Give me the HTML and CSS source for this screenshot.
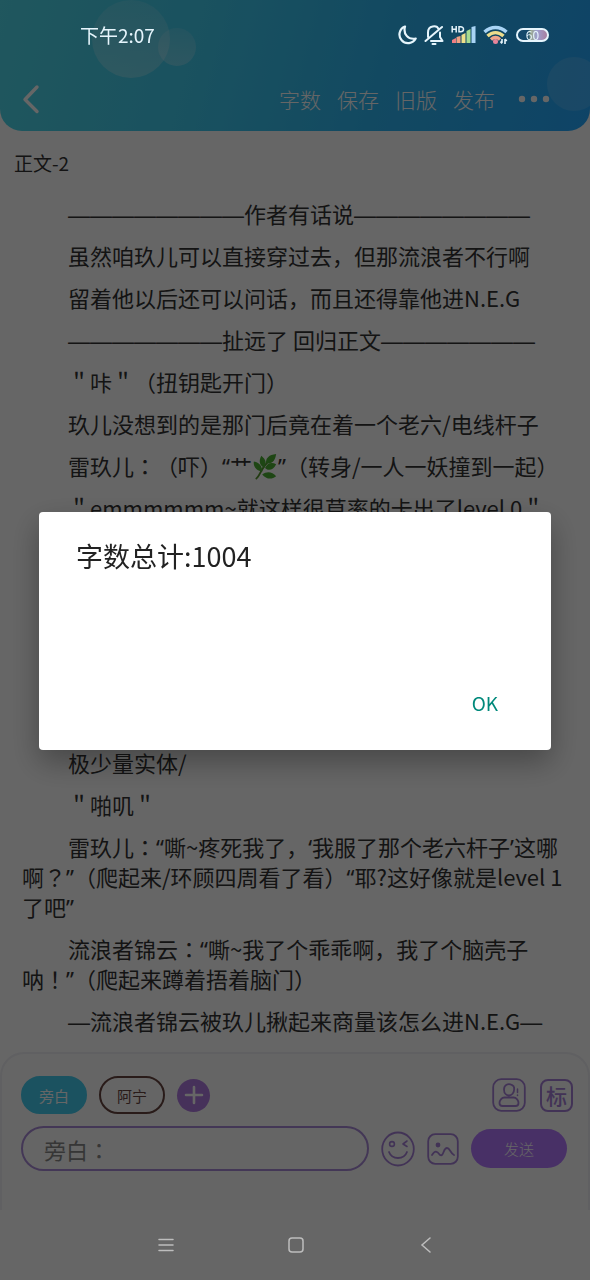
FILE: index.html
```html
<!DOCTYPE html>
<html lang="zh-CN">
<head>
<meta charset="utf-8">
<meta name="viewport" content="width=device-width, initial-scale=1">
<title>正文-2</title>
<link rel="stylesheet" href="styles.css">
</head>
<body>
<div class="app">
  <header class="header">
    <span class="bubble bubble-large"></span>
    <span class="bubble bubble-small"></span>
    <span class="bubble bubble-edge"></span>
    <div class="toolbar">
      <button class="icon-button" aria-label="返回">
        <svg width="20" height="30" viewBox="0 0 20 30" fill="none" stroke="#fff" stroke-width="3.400" stroke-linecap="round" stroke-linejoin="round"><path d="M15 3 3 15.500l12 12"/></svg>
      </button>
      <nav class="actions">
        <button class="action">字数</button>
        <button class="action">保存</button>
        <button class="action">旧版</button>
        <button class="action">发布</button>
      </nav>
      <button class="icon-button" aria-label="更多">
        <svg width="32" height="8" viewBox="0 0 32 8" fill="#fff"><circle cx="4" cy="4" r="3.2"/><circle cx="16" cy="4" r="3.2"/><circle cx="28" cy="4" r="3.2"/></svg>
      </button>
    </div>
  </header>

  <main class="content">
    <h1 class="chapter">正文-2</h1>
    <article class="story">
      <p><span class="rule">————————</span>作者有话说<span class="rule">————————</span></p>
      <p>虽然咱玖儿可以直接穿过去，但那流浪者不行啊</p>
      <p>留着他以后还可以问话，而且还得靠他进N.E.G</p>
      <p><span class="rule">———————</span>扯远了 回归正文<span class="rule">———————</span></p>
      <p>＂咔＂（扭钥匙开门）</p>
      <p>玖儿没想到的是那门后竟在着一个老六/电线杆子</p>
      <p>雷玖儿<span class="punct" lang="ja">：</span>（吓）<span class="quote">“</span>艹<svg class="herb" viewBox="0 0 26 28" role="img" aria-label="草"><path d="M3 27C8 24 8 15 19 6" fill="none" stroke="#55952d" stroke-width="2"/><g fill="#4cae32"><path d="M25 0c-8 1-11 4-11 10 7 1 10-3 11-10Z"/><path d="M9 2c5 4 6 8 3 13C7 12 6 8 9 2Z"/><path d="M1 8c6 1 9 5 9 11C4 18 0 14 1 8Z"/><path d="M25 11c-5-3-10-1-12 4 4 4 9 2 12-4Z"/><path d="M25 24c-5 4-11 3-15-2 5-4 11-3 15 2Z"/></g></svg><span class="quote">”</span>（转身/一人一妖撞到一起）</p>
      <p>＂emmmmmm~就这样很草率的卡出了level 0＂</p>
      <p class="scene">极少量实体/</p>
      <p>＂啪叽＂</p>
      <p>雷玖儿<span class="punct" lang="ja">：</span><span class="quote">“</span>嘶~疼死我了，<span class="quote">‘</span>我服了那个老六杆子<span class="quote">’</span>这哪啊<span class="punct" lang="ja">？</span><span class="quote">”</span>（爬起来/环顾四周看了看）<span class="quote">“</span>耶?这好像就是level 1了吧<span class="quote">”</span></p>
      <p>流浪者锦云<span class="punct" lang="ja">：</span><span class="quote">“</span>嘶~我了个乖乖啊，我了个脑壳子呐<span class="punct" lang="ja">！</span><span class="quote">”</span>（爬起来蹲着捂着脑门）</p>
      <p><span class="rule">—</span>流浪者锦云被玖儿揪起来商量该怎么进N.E.G<span class="rule">—</span></p>
    </article>
  </main>

  <form class="composer">
    <div class="roles">
      <button type="button" class="role role-active">旁白</button>
      <button type="button" class="role">阿宁</button>
      <button type="button" class="add" aria-label="添加角色">
        <svg width="20" height="20" viewBox="0 0 20 20" stroke="#fff" stroke-width="2.600" stroke-linecap="round"><path d="M10 2v16M2 10h16"/></svg>
      </button>
      <div class="tools">
        <button type="button" class="icon-button" aria-label="角色">
          <svg width="34" height="34" viewBox="0 0 34 34" fill="none" stroke="#a680d8" stroke-width="1.800" stroke-linecap="round"><rect x="1.2" y="1.2" width="31.6" height="31.6" rx="8"/><path d="M20 7c-4-2-8 0-8 4.500s3 6 5 6 6-2 5-8c0-2-2-2-2-2.500ZM12.500 19.500h9c3 0 5 3 5 5.500 0 2-1 3-3 3h-13c-2 0-3-1-3-3 0-2.500 2-5.500 5-5.500Z"/><path d="M25.500 11v3.500M25.500 17v.5" stroke-width="1.500"/></svg>
        </button>
        <button type="button" class="tag">标</button>
      </div>
    </div>
    <div class="entry">
      <input class="message" type="text" lang="ja" placeholder="旁白：" aria-label="旁白">
      <button type="button" class="icon-button" aria-label="表情">
        <svg width="34" height="36" viewBox="0 0 34 36" fill="none" stroke="#a680d8" stroke-width="1.800" stroke-linecap="round" stroke-linejoin="round"><ellipse cx="17" cy="18" rx="15.800" ry="16.500"/><path d="M8 21c3 8 15 8 18 0"/><circle cx="11" cy="13" r="2.400" stroke-width="1.600"/><path d="m26 10-4 3 4 2.500" stroke-width="1.600"/></svg>
      </button>
      <button type="button" class="icon-button" aria-label="图片">
        <svg width="32" height="32" viewBox="0 0 32 32" fill="none" stroke="#a680d8" stroke-width="1.800" stroke-linecap="round" stroke-linejoin="round"><rect x="1.200" y="1.200" width="29.600" height="29.600" rx="7"/><path d="M5 22c3-5 5-4 8 0 4 2 3-7 7-7 3 0 3 5 7 7"/><circle cx="11" cy="12" r="1.500" fill="#a680d8"/></svg>
      </button>
      <button type="submit" class="send">发送</button>
    </div>
  </form>
  <div class="nav-space"></div>
</div>

<div class="scrim">
  <section class="dialog" role="dialog" aria-modal="true" aria-labelledby="dialog-title">
    <h2 class="dialog-title" id="dialog-title">字数总计:1004</h2>
    <button class="dialog-ok">OK</button>
  </section>
</div>

<div class="status-bar">
  <time>下午2:07</time>
  <div class="status-icons">
    <svg width="20" height="20" viewBox="0 0 20 20" fill="none" stroke="#e6f5fc" stroke-width="2.200" stroke-linejoin="round"><path d="M8 1.500A8.600 8.600 0 1 0 18.700 13.500C11 15 6 9 8 1.500Z"/></svg>
    <svg width="20" height="20" viewBox="0 0 20 20" fill="none" stroke="#e6f5fc" stroke-width="2" stroke-linecap="round" stroke-linejoin="round"><path d="M4 12V7.500C4 0 13 0 14.500 4M16 7.500V12l2.500 4H7M1.500 16 18 2M8.500 19h3"/></svg>
    <svg width="25" height="19" viewBox="0 0 25 19"><g fill="none" stroke="#e6f5fc" stroke-width="1.500"><path d="M1.200 1v6.500M5.200 1v6.500M1.200 4.200h4M8 1.700v5.100h1.500c4 0 4-5.100 0-5.100Z"/></g><path fill="#ef7f83" d="M1 15l4-2v5H1z"/><path fill="#f1a083" d="M5.500 12l4-1v7h-4z"/><path fill="#eee08a" d="M10.500 10l4-2v10h-4z"/><path fill="#a6dc91" d="M15.500 6l4-2v14h-4z"/><path fill="#a9d4f5" d="M20.500 2l4-1v17h-4z"/></svg>
    <svg class="wifi" width="26" height="20" viewBox="0 0 26 20" fill="none" stroke-width="3.400"><path stroke="#a9d4f5" d="M1.500 7C8 1 17 1 23.500 7"/><path stroke="#ecdc8c" d="M4.500 11c5-4.500 11-4.500 16 0"/><path stroke="#f0a58a" d="M8 14.500c3-2.600 6-2.600 9 0"/><circle cx="12.500" cy="16.500" r="2.500" fill="#e8849a"/><path stroke="#e6f5fc" stroke-width="1.600" d="M19 14v4M22 14v5M17.500 16.500l1.500 2M22 14l1.800 2"/></svg>
    <span class="battery">60</span>
  </div>
</div>

<nav class="system-nav">
  <button class="icon-button" aria-label="最近任务"><svg width="16" height="16" viewBox="0 0 16 16" stroke="#bdbdbd" stroke-width="1.500" stroke-linecap="round"><path d="M1 2.500h14M1 8h14M1 13.500h14"/></svg></button>
  <button class="icon-button" aria-label="主屏幕"><svg width="16" height="16" viewBox="0 0 16 16" fill="none" stroke="#bdbdbd" stroke-width="1.500"><rect x="1" y="1" width="14" height="14" rx="3"/></svg></button>
  <button class="icon-button" aria-label="后退"><svg width="16" height="16" viewBox="0 0 16 16" fill="none" stroke="#bdbdbd" stroke-width="1.500" stroke-linecap="round"><path d="M12 1 4 8l8 7"/></svg></button>
</nav>
</body>
</html>
```
FILE: styles.css
```css
* {
  box-sizing: border-box;
}

body {
  margin: 0;
  background: #fff;
  color: #333;
  font-family: "Noto Sans CJK SC", "Noto Sans", sans-serif;
  text-spacing-trim: space-all;
}

button,
input {
  margin: 0;
  padding: 0;
  border: 0;
  background: none;
  color: inherit;
  font: inherit;
}

svg {
  display: block;
}

.app {
  display: flex;
  flex-direction: column;
  min-height: 100vh;
}

.icon-button {
  display: flex;
  align-items: center;
  justify-content: center;
  flex: none;
}

.header {
  position: relative;
  overflow: hidden;
  padding: 69px 40px 2px 22px;
  border-radius: 0 0 22px 22px;
  background: linear-gradient(105deg, #50d9ea 0%, #40cbee 35%, #2eb6f3 65%, #25a9ff 100%);
}

.bubble {
  position: absolute;
  border-radius: 50%;
  background: linear-gradient(#ffffff1c, #ffffff40);
}

.bubble-large {
  top: 0;
  left: 92px;
  width: 78px;
  height: 78px;
}

.bubble-small {
  top: 28px;
  left: 158px;
  width: 38px;
  height: 38px;
}

.bubble-edge {
  top: 57px;
  right: -11px;
  width: 54px;
  height: 54px;
  background: #ffffff20;
}

.toolbar {
  position: relative;
  display: flex;
  align-items: center;
  height: 60px;
  color: #fff;
}

.actions {
  display: flex;
  gap: 16px;
  margin: 0 23px 0 auto;
}

.action {
  font-size: 21px;
  font-weight: 300;
  line-height: 30px;
}

.content {
  flex: 1;
  padding: 17px 14px 10px;
}

.chapter {
  margin: 0 0 20px;
  font-size: 19px;
  font-weight: 400;
  line-height: 30px;
}

.story {
  padding-left: 8px;
  font-size: 22px;
  line-height: 30px;
}

.story p {
  margin: 0 0 12px;
  text-indent: 46px;
}

.story .scene {
  margin-top: 225px;
}

.story p:last-child {
  margin-bottom: 0;
}

.quote {
  font-family: "Noto Sans", sans-serif;
  line-height: 1;
}

.rule {
  font-family: "Liberation Sans", sans-serif;
  line-height: 1;
}

.punct {
  font-family: "Noto Sans CJK JP", sans-serif;
  line-height: 1;
}

.herb {
  display: inline-block;
  width: 26px;
  height: 26px;
  vertical-align: -5px;
}

.composer {
  display: flex;
  flex-direction: column;
  gap: 12px;
  padding: 22px 15px 39px 19px;
  border: 2px solid #f0f0f4;
  border-bottom: 0;
  border-radius: 24px 24px 0 0;
  background: #fcfcfc;
}

.roles,
.entry,
.tools {
  display: flex;
  align-items: center;
}

.roles {
  gap: 12px;
}

.role {
  width: 66px;
  height: 38px;
  border: 2px solid #66443f;
  border-radius: 19px;
  color: #66443f;
  font-size: 15px;
}

.role-active {
  border-color: #45cdef;
  background: #45cdef;
  color: #fff;
}

.add {
  display: flex;
  align-items: center;
  justify-content: center;
  width: 33px;
  height: 33px;
  border-radius: 50%;
  background: #b07ae0;
}

.tools {
  gap: 14px;
  margin-left: auto;
}

.tag {
  width: 33px;
  height: 33px;
  border: 2px solid #a680d8;
  border-radius: 8px;
  color: #a680d8;
  font-size: 21px;
  font-weight: 500;
  line-height: 28px;
}

.entry {
  gap: 12px;
  padding-right: 6px;
}

.message {
  flex: 1;
  min-width: 0;
  height: 45px;
  padding: 0 21px;
  border: 2px solid #a98ad6;
  border-radius: 23px;
  font-family: "Noto Sans CJK JP", sans-serif;
  font-size: 22px;
}

.message::placeholder {
  color: #888;
  opacity: 1;
}

.send {
  width: 96px;
  height: 39px;
  border-radius: 20px;
  background: #b478ff;
  color: #fff;
  font-size: 15px;
  font-weight: 300;
}

.nav-space {
  height: 70px;
}

.scrim {
  position: fixed;
  inset: 0;
  display: flex;
  align-items: center;
  justify-content: center;
  padding: 0 39px 18px;
  background: #00000099;
}

.dialog {
  display: flex;
  flex-direction: column;
  flex: 1;
  min-height: 238px;
  padding: 24px 37px 27px;
  border-radius: 4px;
  background: #fff;
  box-shadow: 0 12px 30px #00000050;
}

.dialog-title {
  margin: 0;
  color: #222;
  font-size: 27px;
  font-weight: 400;
  line-height: 40px;
}

.dialog-ok {
  align-self: flex-end;
  margin-top: auto;
  padding: 0 16px;
  color: #00897b;
  font-size: 19px;
  line-height: 40px;
}

.status-bar {
  position: fixed;
  top: 0;
  left: 0;
  right: 0;
  display: flex;
  align-items: center;
  justify-content: space-between;
  height: 69px;
  padding: 0 41px 0 80px;
  color: #e6f5fc;
  font-size: 19px;
}

.status-icons {
  display: flex;
  align-items: center;
  gap: 7px;
}

.battery {
  width: 33px;
  height: 14px;
  border: 2px solid #e6f5fc;
  border-radius: 7px;
  background: linear-gradient(90deg, #14486a 35%, #9aa88f 45%, #9d9fd0 65%, #a97f9f 100%);
  font-size: 12px;
  line-height: 10px;
  text-align: center;
}

.system-nav {
  position: fixed;
  right: 0;
  bottom: 0;
  left: 0;
  display: flex;
  align-items: center;
  justify-content: space-between;
  height: 70px;
  padding: 0 156px 0 158px;
}
```
